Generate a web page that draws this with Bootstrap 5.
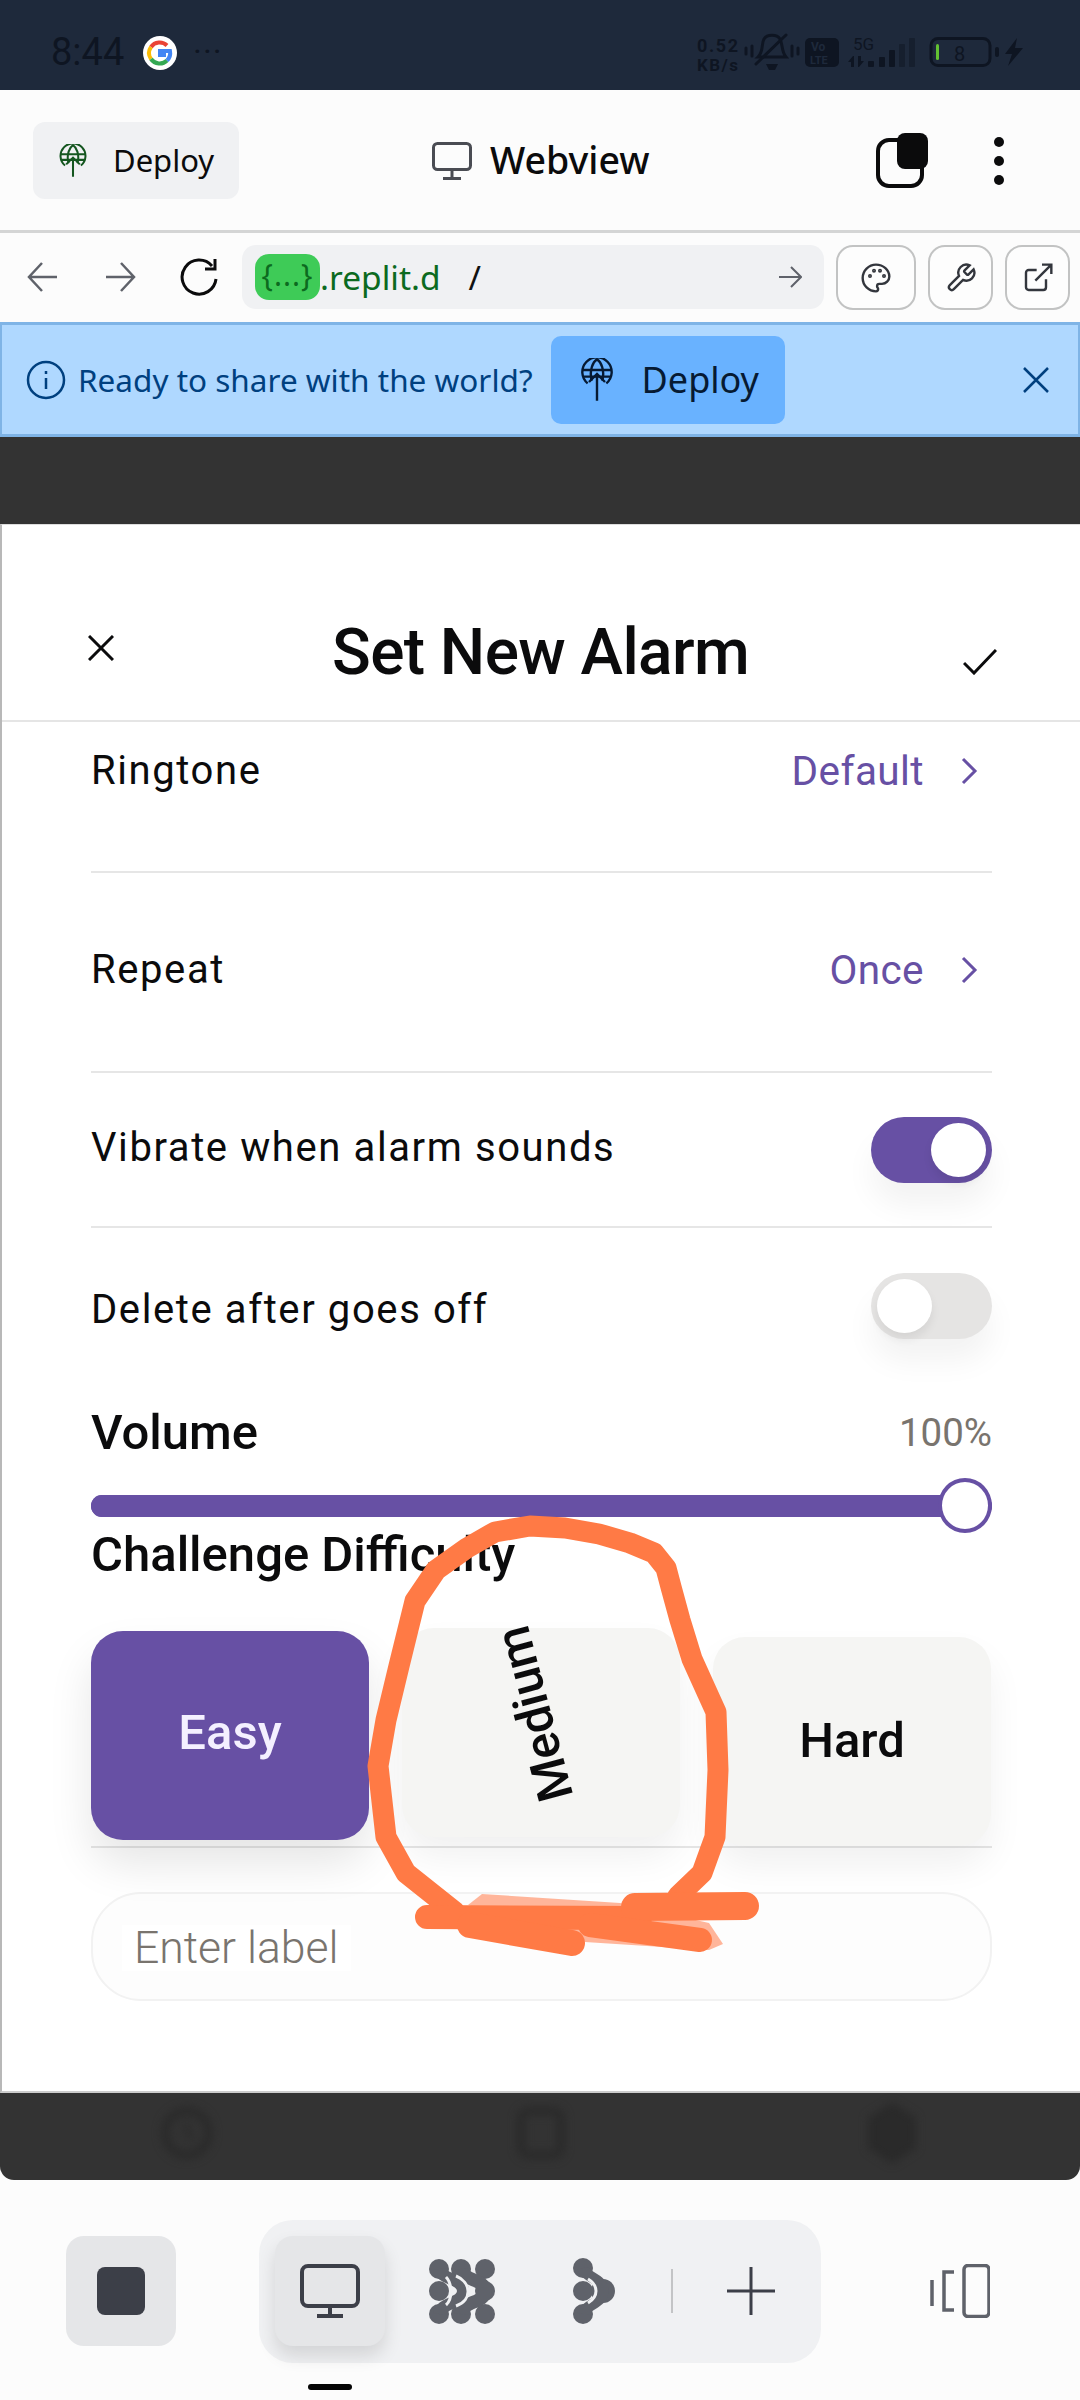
<!DOCTYPE html>
<html lang="en">
<head>
  <meta charset="UTF-8">
  <title>Set New Alarm</title>
  <link href="https://cdn.jsdelivr.net/npm/bootstrap@5.3.0/dist/css/bootstrap.min.css" rel="stylesheet">
  <style>
    html, body { margin: 0; width: 1080px; height: 2400px; overflow: hidden; background: #fcfcfc; }
    body { font-family: "Noto Sans", sans-serif; color: #0b0b0c; position: relative; }

    .status-strip { height: 90px; background: #1e293b; color: #0e1522; padding-left: 51px; font-family: Roboto, sans-serif; }
    .status-time { font-size: 38px; width: 92px; margin-top: 15px; }
    .status-g { margin-top: 15px; }
    .status-dots { margin-left: 16px; font-size: 34px; letter-spacing: 1px; line-height: 1; margin-top: 12px; }

    .top-strip { height: 143px; border-bottom: 3px solid #d4d5d5; padding: 32px 0 0 33px; }
    .deploy-chip { width: 206px; height: 77px; background: #f0f1f3; border-radius: 12px; font-size: 31px; padding-left: 26px; gap: 26px; }
    .view-title { font-size: 37.5px; font-weight: 500; margin-left: 193px; gap: 18px; height: 77px; }
    .tab-icon { margin: 10px 0 0 226px; }
    .more-icon { margin: 14px 0 0 65px; }

    .url-strip { height: 89px; padding: 12px 0 0 26px; }
    .url-box { width: 582px; height: 64px; background: #f0f1f3; border-radius: 14px; margin-left: 22px; padding: 0 22px 0 13px; font-size: 33.5px; color: #0c6a1f; }
    .url-chip { width: 65px; height: 46px; background: #3ecb57; border-radius: 14px; font-size: 30px; letter-spacing: 1px; text-align: center; line-height: 42px; }
    .url-slash { color: #111; margin-left: 28px; }
    .tool-btn { height: 65px; border: 2px solid #c2c3c3; border-radius: 17px; background: #fdfdfd; }

    .share-strip { height: 115px; background: #afd8ff; border: 3px solid #7fb4e6; border-width: 3px 2px; color: #00407f; font-size: 31.5px; padding-left: 24px; gap: 12px; }
    .share-btn { width: 234px; height: 88px; background: #69b2ff; border-radius: 10px; color: #061a33; font-size: 36px; padding-left: 30px; gap: 29px; margin-left: 6px; }

    .dim-top { height: 87px; background: #333; }
    .alarm-sheet { height: 1569px; background: #fff; border-left: 2px solid #b8b8b8; border-top: 1px solid #ddd; border-bottom: 2px solid #ccc; font-family: Roboto, sans-serif; }
    .sheet-head { height: 197px; border-bottom: 2px solid #e5e5e5; padding-left: 86px; }
    .sheet-title { font-size: 64px; font-weight: 500; letter-spacing: -.6px; width: 417px; margin-left: 218px; line-height: 1; margin-top: 96px; white-space: nowrap; }
    .sheet-body { padding: 0 88px 0 89px; }
    .opt-row { border-bottom: 2px solid #e6e6e6; font-size: 40px; letter-spacing: 1.6px; line-height: 48px; }
    .opt-value { color: #6750a4; letter-spacing: .4px; font-size: 40.5px; }
    .opt-one { height: 151px; padding-top: 25px; }
    .opt-two { height: 200px; padding-top: 73px; }
    .opt-three { height: 155px; padding-top: 51px; }
    .opt-four { border: 0; padding-top: 58px; }
    .sw-track { width: 121px; height: 66px; border-radius: 33px; padding: 6px; box-shadow: 0 22px 30px rgba(0,0,0,.05); }
    .sw-on { background: #6750a4; justify-content: flex-end; }
    .sw-off { background: #e5e4e3; }
    .sw-knob { width: 55px; height: 54px; background: #fff; border-radius: 50%; box-shadow: 0 6px 10px rgba(0,0,0,.07); }
    .sec-title { font-size: 49px; font-weight: 500; line-height: 54px; }
    .vol-pct { font-size: 38.5px; color: #79746e; }
    .vol-progress { height: 22px; background: #6750a4; border-radius: 11px; overflow: visible; margin-top: 33px; }
    .vol-bar { background: #6750a4; border-radius: 11px; }
    .vol-thumb { position: absolute; right: 0; top: -17px; width: 54px; height: 55px; background: #fff; border: 4px solid #6750a4; border-radius: 50%; }
    .level-row { margin-top: 49px; height: 217px; gap: 33px; border-bottom: 2px solid #e6e6e6; }
    .level-btn { width: 278px; height: 209px; border-radius: 32px; background: #f5f5f3; font-size: 49px; font-weight: 500; box-shadow: 0 20px 36px rgba(0,0,0,.06); flex: none; }
    .level-easy { background: #6750a4; color: #f4f0ff; box-shadow: 0 24px 44px rgba(0,0,0,.1); margin-top: 0; padding-bottom: 6px; }
    .level-mid { margin-top: -3px; }
    .level-hard { margin-top: 6px; padding-bottom: 2px; }
    .level-turned { display: block; transform: translate(-6px, -19px) rotate(-105deg); white-space: nowrap; }
    .label-box { margin-top: 44px; height: 109px; border: 2px solid #f2f2f2; border-radius: 50px; background: #fdfdfd; padding-left: 31px; }
    .label-hint { background: #fff; font-size: 44.5px; font-weight: 300; color: #79746e; padding: 0 12px; line-height: 46px; margin-top: 4px; margin-left: -2px; }

    .dim-bottom { height: 87px; background: #333; border-radius: 0 0 14px 14px; }
    .dim-icons { filter: blur(4px); }
    .dock { height: 220px; padding: 40px 0 0 66px; }
    .dock-stop { width: 110px; height: 110px; background: #e5e6e8; border-radius: 18px; margin-top: 16px; }
    .dock-square { width: 48px; height: 48px; background: #3c3f48; border-radius: 8px; }
    .dock-pill { width: 562px; height: 143px; background: #f0f1f3; border-radius: 34px; margin-left: 83px; padding: 16px; }
    .dock-active { width: 110px; height: 110px; background: #e5e6e8; border-radius: 18px; box-shadow: 0 10px 18px rgba(0,0,0,.12); }
    .dock-mark { width: 44px; height: 6px; background: #050505; border-radius: 3px; margin: 21px 0 0 132px; }
    .dock-sep { width: 2px; height: 44px; background: #c3c4c6; margin: 33px 0 0 0; }
    .scribble { position: absolute; left: 0; top: 0; pointer-events: none; }
  </style>
</head>
<body>
  <div class="status-strip d-flex align-items-center">
    <span class="status-time">8:44</span>
    <svg class="status-g" width="34" height="34" viewBox="0 0 34 34">
      <circle cx="17" cy="17" r="17" fill="#fff"/>
      <path d="M24 9.500A10.500 10.500 0 0 0 8 11" fill="none" stroke="#ea4335" stroke-width="4"/>
      <path d="M8 11a10.500 10.500 0 0 0 0 12" fill="none" stroke="#fbbc05" stroke-width="4"/>
      <path d="M8 23a10.500 10.500 0 0 0 16 1.500" fill="none" stroke="#34a853" stroke-width="4"/>
      <path d="M24 24.500A10.500 10.500 0 0 0 27 15H17v4h6" fill="none" stroke="#4285f4" stroke-width="4"/>
    </svg>
    <span class="status-dots">&middot;&middot;&middot;</span>
    <svg class="ms-auto" width="420" height="90" viewBox="0 0 420 90" fill="#0e1522" font-family="Roboto, sans-serif">
      <text x="37" y="52" font-size="18" font-weight="700" textLength="41">0.52</text>
      <text x="37" y="71" font-size="17" font-weight="700" textLength="41">KB/s</text>
      <g fill="none" stroke="#0e1522" stroke-width="3" stroke-linecap="round">
        <path d="M98 57c6-6 3-13 6-18 3-5 13-5 16 0 3 5 1 12 6 18z"/>
        <path d="M96 64 126 35"/>
        <path d="M92 46v10M86 48v6M132 46v10M138 48v6"/>
      </g>
      <path d="M106 64h12l-3 6h-6z"/>
      <rect x="145" y="38" width="34" height="29" rx="5"/>
      <text x="151" y="51" font-size="12" font-weight="700" fill="#1e293b">Vo</text>
      <text x="150" y="64" font-size="11" font-weight="700" fill="#1e293b">LTE</text>
      <text x="193" y="50" font-size="17">5G</text>
      <path d="M193 56l-5 6h3v5h3v-11zM199 67l5-6h-3v-5h-3v11z"/>
      <rect x="208" y="61" width="6" height="6" rx="1"/>
      <rect x="219" y="57" width="6" height="10" rx="1"/>
      <rect x="229" y="50" width="6" height="17" rx="1"/>
      <rect x="239" y="44" width="6" height="23" rx="1" opacity=".5"/>
      <rect x="249" y="38" width="6" height="29" rx="1" opacity=".5"/>
      <rect x="271" y="38.500" width="59" height="27" rx="7" fill="none" stroke="#0e1522" stroke-width="3"/>
      <rect x="276" y="44" width="3" height="16" rx="1.500" fill="#63c132"/>
      <text x="294" y="61" font-size="20">8</text>
      <rect x="335" y="47" width="4" height="10" rx="2"/>
      <path d="M357 38 345 54h7l-4 12 15-18h-8z"/>
    </svg>
  </div>

  <div class="top-strip d-flex align-items-start">
    <div class="deploy-chip d-flex align-items-center">
      <svg width="28" height="34" viewBox="0 0 24 30" fill="none" stroke="#14561f" stroke-width="1.800">
        <path d="M5 19a11 11 0 1 1 14 0"/>
        <path d="M8 17C6 9 9 3 12 1c3 2 6 8 4 16M1 9h22M2 14h20"/>
        <path d="M12 29V12M6 18l6-6 6 6"/>
      </svg>
      <span>Deploy</span>
    </div>
    <div class="view-title d-flex align-items-center">
      <svg width="40" height="38" viewBox="0 0 40 38" fill="none" stroke="#4a4c53" stroke-width="3">
        <rect x="1.500" y="1.500" width="37" height="26" rx="4"/>
        <path d="M20 28v8M11 36.500h18"/>
      </svg>
      <span>Webview</span>
    </div>
    <svg class="tab-icon" width="52" height="56" viewBox="0 0 52 56">
      <rect x="2" y="8" width="44" height="46" rx="11" fill="none" stroke="#0b0b0c" stroke-width="4"/>
      <rect x="21" y="1" width="31" height="36" rx="8" fill="#0b0b0c"/>
    </svg>
    <svg class="more-icon" width="12" height="50" viewBox="0 0 12 50" fill="#0b0b0c">
      <circle cx="6" cy="6" r="5"/><circle cx="6" cy="25" r="5"/><circle cx="6" cy="44" r="5"/>
    </svg>
  </div>

  <div class="url-strip d-flex align-items-start">
    <div class="d-flex align-items-center" style="height:64px">
      <svg width="34" height="34" viewBox="0 0 34 34" fill="none" stroke="#5f626a" stroke-width="2.500">
        <path d="M31 17H4M16 3 3 17l13 14"/>
      </svg>
      <svg style="margin-left:43px" width="34" height="34" viewBox="0 0 34 34" fill="none" stroke="#5f626a" stroke-width="2.500">
        <path d="M3 17h27M18 3l13 14-13 14"/>
      </svg>
      <svg style="margin-left:41px" width="42" height="40" viewBox="0 0 42 40" fill="none" stroke="#0b0b0c" stroke-width="3">
        <path d="M34 9A17 17 0 1 0 38 22"/><path d="M37 2v10H27"/>
      </svg>
    </div>
    <div class="url-box d-flex align-items-center">
      <span class="url-chip">{...}</span><span>.replit.d</span><span class="url-slash">/</span>
      <svg class="ms-auto" width="24" height="26" viewBox="0 0 24 26" fill="none" stroke="#5f626a" stroke-width="2">
        <path d="M1 13h21M13 3l10 10-10 10"/>
      </svg>
    </div>
    <div class="tool-btn d-flex align-items-center justify-content-center" style="width:80px;margin-left:12px">
      <svg width="32" height="32" viewBox="0 0 24 24" fill="none" stroke="#33363d" stroke-width="1.800">
        <path d="M12 2C6.500 2 2 6.500 2 12s4.500 10 10 10c.9 0 1.600-.7 1.600-1.700 0-.4-.2-.8-.4-1.100-.3-.3-.4-.7-.4-1.100 0-.9.8-1.700 1.700-1.700h2c3 0 5.500-2.500 5.500-5.500C22 6 17.500 2 12 2z"/>
        <circle cx="7.500" cy="10.500" r=".6"/><circle cx="10.500" cy="6.500" r=".6"/><circle cx="15" cy="6.500" r=".6"/><circle cx="18" cy="10.500" r=".6"/>
      </svg>
    </div>
    <div class="tool-btn d-flex align-items-center justify-content-center" style="width:65px;margin-left:12px">
      <svg width="32" height="32" viewBox="0 0 24 24" fill="none" stroke="#33363d" stroke-width="1.800">
        <path d="M14.700 6.300a1 1 0 0 0 0 1.400l1.600 1.600a1 1 0 0 0 1.400 0l3.770-3.770a6 6 0 0 1-7.940 7.940l-6.910 6.910a2.120 2.120 0 0 1-3-3l6.910-6.910a6 6 0 0 1 7.940-7.940z"/>
      </svg>
    </div>
    <div class="tool-btn d-flex align-items-center justify-content-center" style="width:65px;margin-left:12px">
      <svg width="32" height="32" viewBox="0 0 24 24" fill="none" stroke="#33363d" stroke-width="1.800">
        <path d="M18 13v6a2 2 0 0 1-2 2H5a2 2 0 0 1-2-2V8a2 2 0 0 1 2-2h6M15 2h7v7M10 14 22 2"/>
      </svg>
    </div>
  </div>

  <div class="share-strip d-flex align-items-center">
    <svg width="40" height="40" viewBox="0 0 40 40" fill="none" stroke="#00407f" stroke-width="2.500">
      <circle cx="20" cy="20" r="18"/><path d="M20 18v11M20 11v3"/>
    </svg>
    <span>Ready to share with the world?</span>
    <div class="share-btn d-flex align-items-center">
      <svg width="32" height="44" viewBox="0 0 24 33" fill="none" stroke="#061a33" stroke-width="1.800">
        <path d="M5 19a11 11 0 1 1 14 0"/>
        <path d="M8 17C6 9 9 3 12 1c3 2 6 8 4 16M1 9h22M2 14h20"/>
        <path d="M12 32V12M6 18l6-6 6 6"/>
      </svg>
      <span>Deploy</span>
    </div>
    <svg class="ms-auto" style="margin-right:28px" width="28" height="28" viewBox="0 0 28 28" stroke="#00407f" stroke-width="2.500">
      <path d="M2 2l24 24M26 2 2 26"/>
    </svg>
  </div>

  <div class="dim-top"></div>

  <div class="alarm-sheet">
    <div class="sheet-head d-flex align-items-start">
      <svg style="margin-top:110px" width="26" height="26" viewBox="0 0 26 26" stroke="#0b0b0c" stroke-width="3">
        <path d="M1 1l24 24M25 1 1 25"/>
      </svg>
      <div class="sheet-title">Set New Alarm</div>
      <svg style="margin-top:124px;margin-left:214px" width="34" height="26" viewBox="0 0 34 26" fill="none" stroke="#0b0b0c" stroke-width="3">
        <path d="M1 14l10 10L33 1"/>
      </svg>
    </div>
    <div class="sheet-body">
      <div class="opt-row opt-one d-flex">
        <span>Ringtone</span>
        <span class="opt-value ms-auto">Default</span>
        <svg style="margin:10px 14px 0 36px" width="18" height="28" viewBox="0 0 18 28" fill="none" stroke="#6750a4" stroke-width="3"><path d="M3 2l12 12L3 26"/></svg>
      </div>
      <div class="opt-row opt-two d-flex">
        <span>Repeat</span>
        <span class="opt-value ms-auto">Once</span>
        <svg style="margin:10px 14px 0 36px" width="18" height="28" viewBox="0 0 18 28" fill="none" stroke="#6750a4" stroke-width="3"><path d="M3 2l12 12L3 26"/></svg>
      </div>
      <div class="opt-row opt-three d-flex align-items-start">
        <span>Vibrate when alarm sounds</span>
        <div class="sw-track sw-on d-flex ms-auto" style="margin-top:-7px"><div class="sw-knob"></div></div>
      </div>
      <div class="opt-row opt-four d-flex align-items-start">
        <span>Delete after goes off</span>
        <div class="sw-track sw-off d-flex ms-auto" style="margin-top:-13px"><div class="sw-knob"></div></div>
      </div>
      <div class="d-flex align-items-center" style="margin-top:65px">
        <span class="sec-title">Volume</span>
        <span class="vol-pct ms-auto">100%</span>
      </div>
      <div class="progress position-relative vol-progress">
        <div class="progress-bar vol-bar" style="width:100%"></div>
        <div class="vol-thumb"></div>
      </div>
      <div class="sec-title" style="margin-top:11px">Challenge Difficulty</div>
      <div class="level-row d-flex align-items-start">
        <div class="level-btn level-easy d-flex align-items-center justify-content-center">Easy</div>
        <div class="level-btn level-mid d-flex align-items-center justify-content-center"><span class="level-turned">Medium</span></div>
        <div class="level-btn level-hard d-flex align-items-center justify-content-center">Hard</div>
      </div>
      <div class="label-box d-flex align-items-center"><span class="label-hint">Enter label</span></div>
    </div>
  </div>

  <div class="dim-bottom d-flex">
    <svg class="dim-icons" width="1080" height="87" viewBox="0 0 1080 87" fill="none" stroke="#2a2a2a" stroke-width="8">
      <circle cx="187" cy="40" r="22"/><path d="M187 28v12l8 6" stroke-width="4"/>
      <rect x="521" y="18" width="40" height="44" rx="8"/>
      <path d="M892 14l20 13v26l-20 13-20-13V27z" fill="#2a2a2a"/>
    </svg>
  </div>

  <div class="dock d-flex align-items-start">
    <div class="dock-stop d-flex align-items-center justify-content-center"><div class="dock-square"></div></div>
    <div class="d-flex flex-column">
      <div class="dock-pill d-flex align-items-start">
        <div class="dock-active d-flex align-items-center justify-content-center">
          <svg width="60" height="54" viewBox="0 0 60 54" fill="none" stroke="#3c3f48" stroke-width="4">
            <rect x="2" y="2" width="56" height="40" rx="6"/>
            <path d="M30 42v10M17 52h26"/>
          </svg>
        </div>
        <svg style="margin:22px 0 0 44px" width="66" height="66" viewBox="0 0 66 66" fill="#5f626a">
          <circle cx="10" cy="11" r="10"/><circle cx="32" cy="11" r="10"/><circle cx="56" cy="11" r="10"/>
          <circle cx="10" cy="33" r="10"/><circle cx="56" cy="33" r="10"/>
          <circle cx="10" cy="56" r="10"/><circle cx="32" cy="56" r="10"/><circle cx="56" cy="56" r="10"/>
          <path d="M32 11C34 24 56 20 56 33 56 46 34 42 32 56" fill="none" stroke="#5f626a" stroke-width="13"/>
          <path d="M10 11C12 22 34 20 34 33 34 46 12 44 10 56" fill="none" stroke="#5f626a" stroke-width="12"/>
          <path d="M17 19C23 25 24 41 17 47" fill="none" stroke="#f0f1f3" stroke-width="3"/>
          <path d="M27 18C42 24 44 42 27 48" fill="none" stroke="#f0f1f3" stroke-width="3"/>
        </svg>
        <svg style="margin:22px 0 0 78px" width="42" height="66" viewBox="0 0 42 66" fill="#5f626a">
          <circle cx="10" cy="10" r="10"/><circle cx="10" cy="33" r="10"/><circle cx="10" cy="56" r="10"/>
          <circle cx="30" cy="33" r="12"/>
          <path d="M10 10c2 10 20 10 20 23S12 46 10 56" fill="none" stroke="#5f626a" stroke-width="11"/>
          <path d="M15 21c5 3 8 8 8 12s-3 9-8 12" fill="none" stroke="#f0f1f3" stroke-width="3"/>
        </svg>
        <div class="dock-sep" style="margin-left:56px"></div>
        <svg style="margin:31px 0 0 54px" width="48" height="48" viewBox="0 0 48 48" stroke="#3c3f48" stroke-width="3">
          <path d="M24 0v48M0 24h48"/>
        </svg>
      </div>
      <div class="dock-mark"></div>
    </div>
    <svg style="margin:44px 0 0 109px" width="60" height="54" viewBox="0 0 60 54" fill="none" stroke="#5f626a" stroke-width="3.500">
      <rect x="34" y="1.500" width="25" height="51" rx="4"/>
      <path d="M24 8H14v38h10"/>
      <path d="M2 16v26"/>
    </svg>
  </div>

  <svg class="scribble" width="1080" height="2400" viewBox="0 0 1080 2400" fill="none" stroke="#ff7a45" stroke-linecap="round" stroke-linejoin="round">
    <path d="M482 1894 620 1903 709 1923 723 1944 709 1950 585 1942 468 1905z" fill="#ffb59a" stroke="none"/>
    <path stroke-width="21" d="M455 1912 406 1873 386 1837 378 1766 386 1720 399 1666 415 1601 436 1570 467 1548 495 1532 530 1526 565 1528 599 1534 630 1543 654 1553 666 1568 671 1587 680 1620 692 1659 706 1690 716 1712 718 1770 715 1837 702 1873 678 1896"/>
    <path stroke-width="24" d="M427 1917 640 1918"/>
    <path stroke-width="28" d="M635 1907 745 1906"/>
    <path stroke-width="26" d="M470 1925 572 1943"/>
    <path stroke-width="24" d="M590 1925 700 1940"/>
  </svg>

  <script src="https://cdn.jsdelivr.net/npm/bootstrap@5.3.0/dist/js/bootstrap.bundle.min.js"></script>
</body>
</html>
